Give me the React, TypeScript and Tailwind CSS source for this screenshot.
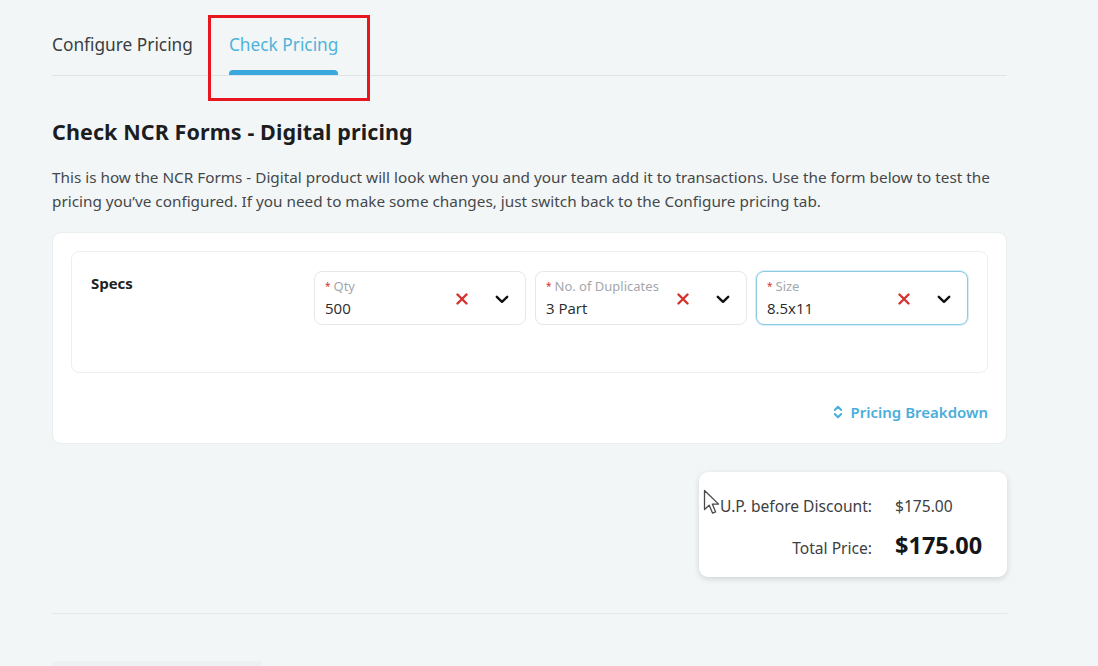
import React from "react";

const SANS = "font-['Noto_Sans','Liberation_Sans',sans-serif]";
const INPUT_FONT = "font-['Open_Sans','Liberation_Sans',sans-serif]";

function ClearIcon() {
  return (
    <svg width="12" height="12" viewBox="0 0 12 12" aria-hidden>
      <path d="M1.5 1.5 L10.5 10.5 M10.5 1.5 L1.5 10.5" stroke="#d3322f" strokeWidth="2.4" strokeLinecap="round" />
    </svg>
  );
}

function Chevron() {
  return (
    <svg width="14" height="9" viewBox="0 0 14 9" aria-hidden>
      <path d="M1.8 1.8 L7 6.8 L12.2 1.8" stroke="#111" strokeWidth="2.4" fill="none" strokeLinecap="round" strokeLinejoin="round" />
    </svg>
  );
}

function SpecSelect({ label, value, focused }: { label: string; value: string; focused?: boolean }) {
  return (
    <div
      className={`flex h-[54px] w-[212px] items-center rounded-[8px] border bg-white pl-[10px] pr-[16px] ${
        focused ? "border-[#8ccbe2] shadow-[0_0_0_1px_rgba(140,203,226,0.35)]" : "border-[#e4e8eb]"
      }`}
    >
      <div className="flex min-w-0 flex-1 flex-col">
        <div className={`${SANS} flex items-center text-[13px] leading-[15px] text-[#a3a8ad]`}>
          <span className="mr-[3px] text-[10px] text-[#d3322f]">*</span>
          {label}
        </div>
        <div className={`${INPUT_FONT} mt-[5px] text-[15px] leading-[18px] text-[#2a2a2a]`}>{value}</div>
      </div>
      <div className="mt-[2px] flex items-center gap-[27px]">
        <ClearIcon />
        <Chevron />
      </div>
    </div>
  );
}

function Cursor() {
  return (
    <svg className="pointer-events-none absolute left-[703px] top-[489px]" width="22" height="28" viewBox="0 0 22 28" aria-hidden>
      <path
        d="M1.5 1.5 L1.5 20.5 L6.2 16.2 L9.6 24.2 L12.6 22.9 L9.3 15.1 L15.6 15.1 Z"
        fill="#ffffff"
        stroke="#4a4a4a"
        strokeWidth="1.3"
        strokeLinejoin="round"
      />
    </svg>
  );
}

export default function App() {
  return (
    <div className={`${SANS} relative min-h-[666px] w-full overflow-hidden bg-[#f2f6f7]`}>
      <div className="ml-[52px] w-[955px] pt-[33px]">
        {/* tabs */}
        <div className="relative flex items-end gap-[36px]">
          <div className="pb-[18px] text-[17.3px] leading-[24px] text-[#3a3d40]">Configure Pricing</div>
          <div className="relative pb-[18px] text-[17.3px] leading-[24px] text-[#4fb3da]">
            Check Pricing
            <div className="absolute bottom-0 left-0 right-0 h-[5px] rounded-t-[4px] bg-[#3aa7dd]" />
          </div>
        </div>
        <div className="h-px w-full bg-[#dfe5e8]" />

        {/* heading */}
        <h1 className="mt-[42px] text-[21.5px] font-bold leading-[27px] tracking-[0.1px] text-[#1c1d1f]">Check NCR Forms - Digital pricing</h1>
        <p className="mt-[20px] text-[15.3px] leading-[24px] text-[#45484b]">
          This is how the NCR Forms - Digital product will look when you and your team add it to transactions. Use the form below to test the
          <br />
          pricing you’ve configured. If you need to make some changes, just switch back to the Configure pricing tab.
        </p>

        {/* pricing form card */}
        <div className="mt-[19px] rounded-[9px] border border-[#e8edef] bg-white px-[18px] pb-[20px] pt-[18px]">
          <div className="flex h-[122px] items-start rounded-[8px] border border-[#eceff1] pl-[19px] pr-[18px] pt-[19px]">
            <div className={`${INPUT_FONT} mt-[1px] w-[223px] text-[15px] font-bold leading-[22px] text-[#222]`}>Specs</div>
            <div className="flex gap-[9px]">
              <SpecSelect label="Qty" value="500" />
              <SpecSelect label="No. of Duplicates" value="3 Part" />
              <SpecSelect label="Size" value="8.5x11" focused />
            </div>
          </div>
          <div className="mt-[28px] flex justify-end">
            <div className="flex items-center gap-[8px] text-[15px] font-semibold leading-[22px] text-[#4aaedb]">
              <svg width="10" height="14" viewBox="0 0 10 14" aria-hidden>
                <path d="M1.8 5 L5 1.8 L8.2 5 M1.8 9 L5 12.2 L8.2 9" stroke="#4aaedb" strokeWidth="2" fill="none" strokeLinecap="round" strokeLinejoin="round" />
              </svg>
              Pricing Breakdown
            </div>
          </div>
        </div>

        {/* totals */}
        <div className="mt-[28px] flex justify-end">
          <div className="w-[308px] rounded-[9px] bg-white pb-[17px] pl-[16px] pr-[20px] pt-[22px] shadow-[0_2px_6px_rgba(0,0,0,0.14)]">
            <div className="grid grid-cols-[157px_1fr] items-baseline gap-x-[23px] gap-y-[13px]">
              <div className="text-right text-[15.6px] leading-[24px] text-[#3d4043]">U.P. before Discount:</div>
              <div className="text-[15.6px] leading-[24px] text-[#3d4043]">$175.00</div>
              <div className="text-right text-[15.6px] leading-[24px] text-[#3d4043]">Total Price:</div>
              <div className="text-[23.5px] font-bold leading-[29px] text-[#151617]">$175.00</div>
            </div>
          </div>
        </div>

        <div className="mt-[36px] h-px w-full bg-[#e4e9ec]" />
        <div className="mt-[47px] h-[5px] w-[210px] rounded-sm bg-[#edf1f3]" />
      </div>

      {/* highlight frame around the active tab */}
      <div className="pointer-events-none absolute left-[208px] top-[15px] h-[86px] w-[162px] border-[3px] border-[#e8161f]" />
      <Cursor />
    </div>
  );
}
